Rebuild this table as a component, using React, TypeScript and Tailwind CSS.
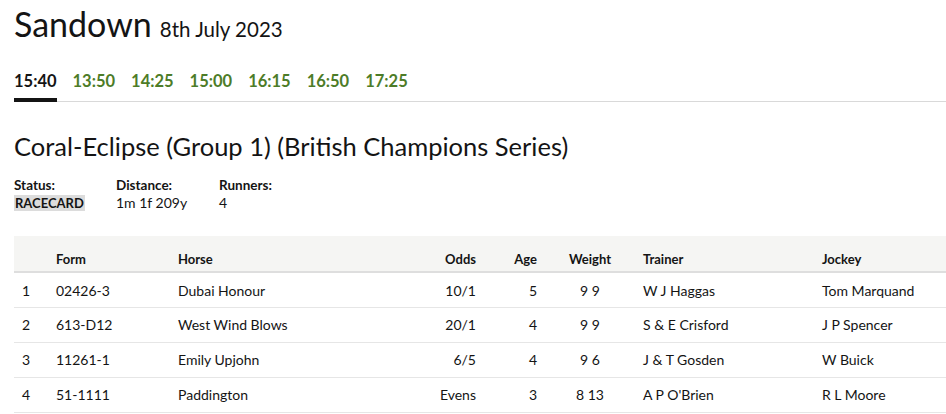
import React from 'react'

const times = ['15:40', '13:50', '14:25', '15:00', '16:15', '16:50', '17:25']

const runners = [
  { no: 1, form: '02426-3', horse: 'Dubai Honour', odds: '10/1', age: 5, weight: '9 9', trainer: 'W J Haggas', jockey: 'Tom Marquand' },
  { no: 2, form: '613-D12', horse: 'West Wind Blows', odds: '20/1', age: 4, weight: '9 9', trainer: 'S & E Crisford', jockey: 'J P Spencer' },
  { no: 3, form: '11261-1', horse: 'Emily Upjohn', odds: '6/5', age: 4, weight: '9 6', trainer: 'J & T Gosden', jockey: 'W Buick' },
  { no: 4, form: '51-1111', horse: 'Paddington', odds: 'Evens', age: 3, weight: '8 13', trainer: "A P O'Brien", jockey: 'R L Moore' },
]

export default function App() {
  return (
    <div className="min-h-[414px] bg-white pl-[14px] text-[#141414] font-['Lato','Noto_Sans',sans-serif]">
      {/* Course + date */}
      <h1 className="pt-[4px] leading-[40px]">
        <span className="text-[34px]">Sandown</span>
        <span className="ml-[8px] text-[20.5px]">8th July 2023</span>
      </h1>

      {/* Race times */}
      <nav className="mt-[20px] flex gap-[16px] border-b border-[#d9d9d9]">
        {times.map((t, i) => (
          <a
            key={t}
            href="#"
            className={
              i === 0
                ? 'pb-[6px] border-b-4 border-[#141414] -mb-px text-[16.5px] font-bold leading-[20px] text-[#141414]'
                : 'pb-[10px] text-[16.5px] font-bold leading-[20px] text-[#4d7c28]'
            }
          >
            {t}
          </a>
        ))}
      </nav>

      {/* Race title */}
      <h2 className="mt-[28px] text-[25.5px] leading-[32px]">Coral-Eclipse (Group 1) (British Champions Series)</h2>

      <div className="mt-[15px] flex text-[13.5px]">
        <div className="w-[102px]">
          <div className="font-bold leading-[16px]">Status:</div>
          <span className="mt-[2px] inline-block bg-[#dcdcdc] px-[1px] text-[13px] font-bold leading-[16px]">RACECARD</span>
        </div>
        <div className="w-[103px]">
          <div className="font-bold leading-[16px]">Distance:</div>
          <div className="mt-[2px] text-[14px] leading-[16px]">1m 1f 209y</div>
        </div>
        <div>
          <div className="font-bold leading-[16px]">Runners:</div>
          <div className="mt-[2px] text-[14px] leading-[16px]">4</div>
        </div>
      </div>

      {/* Runners table */}
      <table className="mt-[23px] w-[932px] table-fixed border-collapse text-[14px]">
        <colgroup>
          <col className="w-[34px]" />
          <col className="w-[122px]" />
          <col className="w-[250px]" />
          <col className="w-[64px]" />
          <col className="w-[61px]" />
          <col className="w-[90px]" />
          <col className="w-[179px]" />
          <col className="w-[132px]" />
        </colgroup>
        <thead>
          <tr className="bg-[#f5f5f3] border-b-2 border-[#dedede] text-[13px] font-bold">
            <th className="h-[36px] px-2 pt-[12px]" />
            <th className="px-2 pt-[12px] text-left">Form</th>
            <th className="px-2 pt-[12px] text-left">Horse</th>
            <th className="px-2 pt-[12px] text-right">Odds</th>
            <th className="px-2 pt-[12px] text-right">Age</th>
            <th className="px-2 pt-[12px] text-center">Weight</th>
            <th className="px-2 pt-[12px] text-left">Trainer</th>
            <th className="px-2 pt-[12px] text-left">Jockey</th>
          </tr>
        </thead>
        <tbody>
          {runners.map((r) => (
            <tr key={r.no} className="h-[35px] border-b border-[#e6e6e6]">
              <td className="px-2">{r.no}</td>
              <td className="px-2">{r.form}</td>
              <td className="px-2">{r.horse}</td>
              <td className="px-2 text-right">{r.odds}</td>
              <td className="px-2 text-right">{r.age}</td>
              <td className="px-2 text-center">{r.weight}</td>
              <td className="px-2">{r.trainer}</td>
              <td className="px-2">{r.jockey}</td>
            </tr>
          ))}
        </tbody>
      </table>
    </div>
  )
}
